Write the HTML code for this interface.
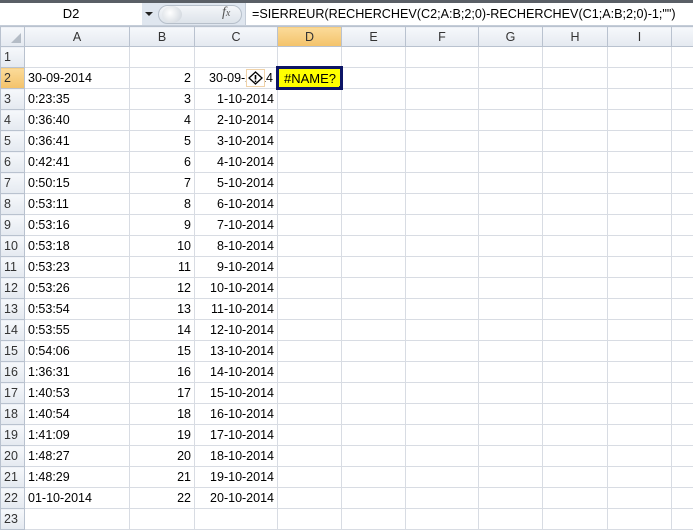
<!DOCTYPE html>
<html><head><style>
*{margin:0;padding:0;box-sizing:border-box}
body{width:693px;height:513px;overflow:hidden;background:#fff;font-family:"Liberation Sans",Arial,sans-serif;font-size:12px;color:#000;position:relative}
.top{position:absolute;left:0;top:0;width:693px;height:3px;background:#5a5f66}
.fb{position:absolute;left:0;top:3px;width:693px;height:23px;background:#dfe6ef;border-bottom:1px solid #c5cdd8}
.nb{position:absolute;left:0;top:0;width:142px;height:22px;background:#fff;text-align:center;line-height:22px;font-size:13px}
.fx{position:absolute;left:245px;top:0;right:0;height:22px;background:#fff;line-height:22px;padding-left:6px;font-size:12.6px;border-left:1px solid #c5cdd8;white-space:nowrap}
table{position:absolute;left:0;top:26px;border-collapse:collapse;table-layout:fixed;width:708px}
td{border:1px solid #d8dce3;height:21px;padding:0 3px;white-space:nowrap;overflow:hidden;font-size:12.5px}
tr.h td{height:20px;background:linear-gradient(#f6f8fb,#e4e9f0);border-color:#b9c2cf;text-align:center;color:#333}
td.r{background:linear-gradient(#f6f8fb,#e4e9f0);border-color:#b9c2cf;text-align:left;padding-left:3px;color:#333}
tr.h td.sel{background:linear-gradient(#fbdb9a,#f3c26a);}
td.rs{background:linear-gradient(#fbdb9a,#f3c26a)!important}
.n{text-align:right}
</style></head><body>
<div class="top"></div>
<div class="fb">
<div class="nb">D2</div>
<div style="position:absolute;left:145px;top:9px;border-left:4px solid transparent;border-right:4px solid transparent;border-top:4px solid #222"></div>
<div style="position:absolute;left:158px;top:2px;width:84px;height:19px;border-radius:10px;background:linear-gradient(#f4f6f9,#dde3ea);border:1px solid #b6bfca"></div>
<div style="position:absolute;left:162px;top:3px;width:20px;height:17px;border-radius:50%;background:radial-gradient(circle at 40% 40%,#fff,#c9d0d8)"></div>
<div style="position:absolute;left:222px;top:2px;font-family:'Liberation Serif',serif;font-style:italic;font-size:14px;color:#555">f<span style="font-size:10px">x</span></div>
<div class="fx">=SIERREUR(RECHERCHEV(C2;A:B;2;0)-RECHERCHEV(C1;A:B;2;0)-1;"")</div>
</div>
<table>
<colgroup><col style="width:24px"><col style="width:105px"><col style="width:65px"><col style="width:83px"><col style="width:64px"><col style="width:64px"><col style="width:73px"><col style="width:64px"><col style="width:65px"><col style="width:64px"><col style="width:37px"></colgroup>
<tr class="h"><td class="r" style="position:relative"><div style="position:absolute;right:3px;bottom:3px;border-left:10px solid transparent;border-bottom:10px solid #b4bcc6"></div></td><td>A</td><td>B</td><td>C</td><td class="sel">D</td><td>E</td><td>F</td><td>G</td><td>H</td><td>I</td><td></td></tr>
<tr><td class="r">1</td><td></td><td></td><td></td><td></td><td></td><td></td><td></td><td></td><td></td><td></td></tr>
<tr><td class="r rs">2</td><td>30-09-2014</td><td class="n">2</td><td class="n" style="position:relative">30-09-2014<span style="position:absolute;left:51px;top:1px;width:19px;height:18px;background:#fff;border:1px solid #f0d2a8"><svg width="17" height="16" viewBox="0 0 17 16" style="position:absolute;left:0;top:0"><path d="M8.5 2 L15 8 L8.5 14 L2 8 Z" fill="#fff" stroke="#000" stroke-width="1.3"/><path d="M8.5 5 V9.5" stroke="#000" stroke-width="1.6"/><circle cx="8.5" cy="11.3" r="0.9"/></svg></span></td><td style="background:#ffff00;border:3px solid #0d1566;padding-left:5px;font-size:13px;position:relative">#NAME?<span style="position:absolute;right:-4px;bottom:-4px;width:5px;height:5px;background:#0d1566"></span></td><td></td><td></td><td></td><td></td><td></td><td></td></tr>
<tr><td class="r">3</td><td>0:23:35</td><td class="n">3</td><td class="n">1-10-2014</td><td></td><td></td><td></td><td></td><td></td><td></td><td></td></tr>
<tr><td class="r">4</td><td>0:36:40</td><td class="n">4</td><td class="n">2-10-2014</td><td></td><td></td><td></td><td></td><td></td><td></td><td></td></tr>
<tr><td class="r">5</td><td>0:36:41</td><td class="n">5</td><td class="n">3-10-2014</td><td></td><td></td><td></td><td></td><td></td><td></td><td></td></tr>
<tr><td class="r">6</td><td>0:42:41</td><td class="n">6</td><td class="n">4-10-2014</td><td></td><td></td><td></td><td></td><td></td><td></td><td></td></tr>
<tr><td class="r">7</td><td>0:50:15</td><td class="n">7</td><td class="n">5-10-2014</td><td></td><td></td><td></td><td></td><td></td><td></td><td></td></tr>
<tr><td class="r">8</td><td>0:53:11</td><td class="n">8</td><td class="n">6-10-2014</td><td></td><td></td><td></td><td></td><td></td><td></td><td></td></tr>
<tr><td class="r">9</td><td>0:53:16</td><td class="n">9</td><td class="n">7-10-2014</td><td></td><td></td><td></td><td></td><td></td><td></td><td></td></tr>
<tr><td class="r">10</td><td>0:53:18</td><td class="n">10</td><td class="n">8-10-2014</td><td></td><td></td><td></td><td></td><td></td><td></td><td></td></tr>
<tr><td class="r">11</td><td>0:53:23</td><td class="n">11</td><td class="n">9-10-2014</td><td></td><td></td><td></td><td></td><td></td><td></td><td></td></tr>
<tr><td class="r">12</td><td>0:53:26</td><td class="n">12</td><td class="n">10-10-2014</td><td></td><td></td><td></td><td></td><td></td><td></td><td></td></tr>
<tr><td class="r">13</td><td>0:53:54</td><td class="n">13</td><td class="n">11-10-2014</td><td></td><td></td><td></td><td></td><td></td><td></td><td></td></tr>
<tr><td class="r">14</td><td>0:53:55</td><td class="n">14</td><td class="n">12-10-2014</td><td></td><td></td><td></td><td></td><td></td><td></td><td></td></tr>
<tr><td class="r">15</td><td>0:54:06</td><td class="n">15</td><td class="n">13-10-2014</td><td></td><td></td><td></td><td></td><td></td><td></td><td></td></tr>
<tr><td class="r">16</td><td>1:36:31</td><td class="n">16</td><td class="n">14-10-2014</td><td></td><td></td><td></td><td></td><td></td><td></td><td></td></tr>
<tr><td class="r">17</td><td>1:40:53</td><td class="n">17</td><td class="n">15-10-2014</td><td></td><td></td><td></td><td></td><td></td><td></td><td></td></tr>
<tr><td class="r">18</td><td>1:40:54</td><td class="n">18</td><td class="n">16-10-2014</td><td></td><td></td><td></td><td></td><td></td><td></td><td></td></tr>
<tr><td class="r">19</td><td>1:41:09</td><td class="n">19</td><td class="n">17-10-2014</td><td></td><td></td><td></td><td></td><td></td><td></td><td></td></tr>
<tr><td class="r">20</td><td>1:48:27</td><td class="n">20</td><td class="n">18-10-2014</td><td></td><td></td><td></td><td></td><td></td><td></td><td></td></tr>
<tr><td class="r">21</td><td>1:48:29</td><td class="n">21</td><td class="n">19-10-2014</td><td></td><td></td><td></td><td></td><td></td><td></td><td></td></tr>
<tr><td class="r">22</td><td>01-10-2014</td><td class="n">22</td><td class="n">20-10-2014</td><td></td><td></td><td></td><td></td><td></td><td></td><td></td></tr>
<tr><td class="r">23</td><td></td><td></td><td></td><td></td><td></td><td></td><td></td><td></td><td></td><td></td></tr>
</table>
</body></html>
